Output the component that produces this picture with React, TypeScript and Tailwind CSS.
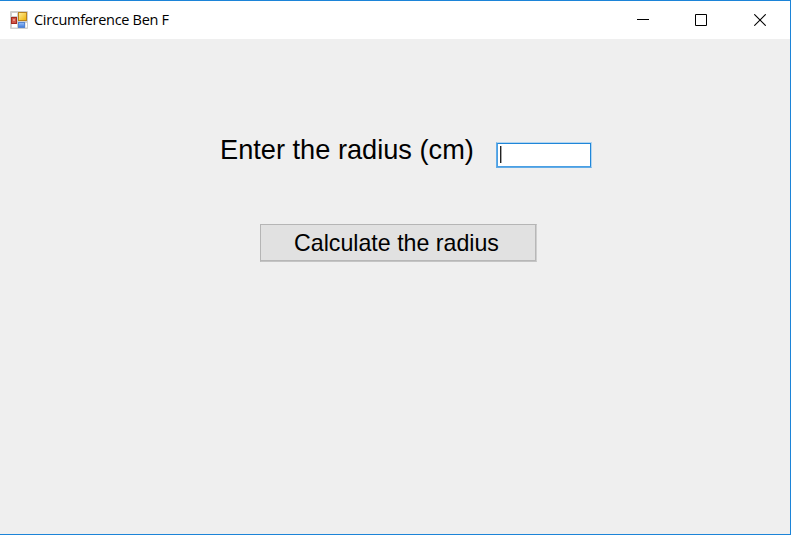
function FormIcon() {
  return (
    <svg width="18" height="18" viewBox="0 0 18 18" className="shrink-0">
      <defs>
        <linearGradient id="gold" x1="0" y1="0" x2="1" y2="1">
          <stop offset="0" stopColor="#fff0a0" />
          <stop offset="1" stopColor="#eeb000" />
        </linearGradient>
        <linearGradient id="blue" x1="0" y1="0" x2="0" y2="1">
          <stop offset="0" stopColor="#9cc3fa" />
          <stop offset="1" stopColor="#3d76d8" />
        </linearGradient>
      </defs>
      <rect width="18" height="18" rx="1" fill="#cfcfcf" />
      <path d="M2 2h5v3h-5zM2 13h5v3.500h-5zM15.500 12h1.500v4.500h-1.500z" fill="#fff" />
      <rect x="1.500" y="6.500" width="5" height="6" fill="#cf5548" stroke="#a52a20" />
      <rect x="3" y="8" width="2" height="2" fill="#e88d82" />
      <rect x="8.500" y="1.500" width="8" height="8" fill="url(#gold)" stroke="#b9821c" />
      <rect x="8.500" y="11.500" width="6" height="5" fill="url(#blue)" stroke="#5585d0" />
    </svg>
  );
}

function TitleBar() {
  return (
    <header className="flex h-[38px] items-center bg-white pl-[10px]">
      <FormIcon />
      <h1 className="ml-[6px] whitespace-nowrap font-['Open_Sans',sans-serif] text-[14.500px] leading-5 tracking-[-0.300px] text-black">
        Circumference Ben F
      </h1>
      <div className="ml-auto flex">
        <button aria-label="Minimize" className="flex h-[38px] w-[58px] items-center justify-center">
          <svg width="12" height="12" shapeRendering="crispEdges"><path d="M0 5.500h12" stroke="#000" /></svg>
        </button>
        <button aria-label="Maximize" className="flex h-[38px] w-[58px] items-center justify-center">
          <svg width="12" height="12"><path d="M.5.5h11v11H.5z" fill="none" stroke="#000" /></svg>
        </button>
        <button aria-label="Close" className="flex h-[38px] w-[60px] items-center justify-center">
          <svg width="12" height="12"><path d="M.3.3l11.400 11.400M11.700.3L.3 11.700" stroke="#000" strokeWidth="1.1" /></svg>
        </button>
      </div>
    </header>
  );
}

export default function App() {
  return (
    <div className="flex h-[535px] w-[791px] flex-col overflow-hidden border-t border-r border-b border-[#1c84d8] bg-[#efefef] font-['Liberation_Sans',Arial,sans-serif] text-black">
      <TitleBar />
      <main className="flex flex-col items-start">
        <div className="mt-[94px] flex pl-[220px]">
          <label htmlFor="radius" className="w-[276px] whitespace-nowrap text-[27.200px] leading-[34px]">
            Enter the radius (cm)
          </label>
          <div className="mt-[9px] flex h-[26px] w-[96px] border border-t-[#b3d5ef] border-r-[#b3d5ef] border-b-[#62abe6] border-l-[#62abe6] bg-white">
            <div className="flex h-full w-full border border-t-[#1f86d9] border-r-[#1f86d9] border-b-[#4a9fe3] border-l-[#4a9fe3] pt-[2px] pl-[2px]">
              <span className="h-[17px] w-px bg-[#222]" />
              <span className="h-[17px] w-px bg-[#a5a5a5]" />
              <input id="radius" className="w-[80px] bg-transparent outline-none" />
            </div>
          </div>
        </div>
        <button className="mt-[56px] ml-[260px] flex h-[38px] w-[277px] items-center justify-center border border-t-[#b5b5b5] border-r-[#cfcfcf] border-b-[#c4c4c4] border-l-[#b5b5b5] bg-[#e1e1e1] text-[23.200px] whitespace-nowrap">
          <span className="flex h-full w-full items-center justify-center border-r border-b border-[#b7b7b7] pt-[2px] pr-[3px]">
            Calculate the radius
          </span>
        </button>
      </main>
    </div>
  );
}
